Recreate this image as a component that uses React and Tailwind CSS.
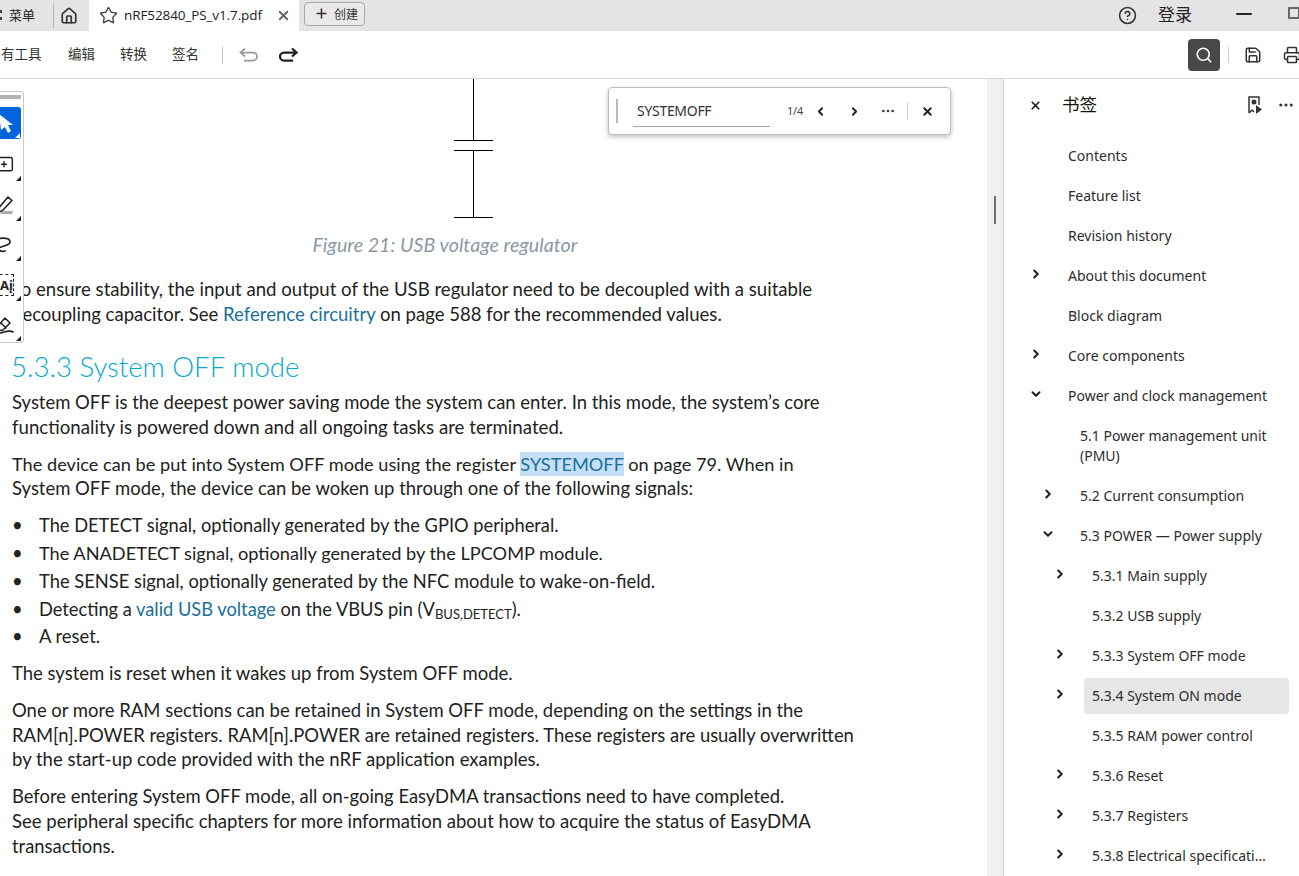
import React from 'react';
import {
  Star, Home, X, Plus, CircleHelp, Minus, Search, Save, Printer,
  ChevronRight, ChevronDown, ChevronLeft, Ellipsis, MessageSquarePlus,
} from 'lucide-react';

const BOOKMARKS = [
  { label: 'Contents', level: 0 },
  { label: 'Feature list', level: 0 },
  { label: 'Revision history', level: 0 },
  { label: 'About this document', level: 0, icon: 'right' },
  { label: 'Block diagram', level: 0 },
  { label: 'Core components', level: 0, icon: 'right' },
  { label: 'Power and clock management', level: 0, icon: 'down' },
  { label: '5.1 Power management unit (PMU)', level: 1 },
  { label: '5.2 Current consumption', level: 1, icon: 'right' },
  { label: '5.3 POWER — Power supply', level: 1, icon: 'down' },
  { label: '5.3.1 Main supply', level: 2, icon: 'right' },
  { label: '5.3.2 USB supply', level: 2 },
  { label: '5.3.3 System OFF mode', level: 2, icon: 'right' },
  { label: '5.3.4 System ON mode', level: 2, icon: 'right', active: true },
  { label: '5.3.5 RAM power control', level: 2 },
  { label: '5.3.6 Reset', level: 2, icon: 'right' },
  { label: '5.3.7 Registers', level: 2, icon: 'right' },
  { label: '5.3.8 Electrical specifications', level: 2, icon: 'right', clip: true },
];

const LEVELS = ['pl-[24px]', 'pl-[36px]', 'pl-[48px]'];

function Corner() {
  return <span className="absolute right-0 bottom-0 w-0 h-0 border-l-[5px] border-l-transparent border-b-[5px] border-b-[#222]" />;
}

function ToolBtn({ children }) {
  return (
    <div className="relative w-[21px] h-[32px] flex items-center justify-end pr-[7px] mb-[8px]">
      {children}
      <Corner />
    </div>
  );
}

function BookmarkRow({ item }) {
  return (
    <div className={`flex ${LEVELS[item.level]} pr-[10px] py-[2px]`}>
      <div className="w-[16px] shrink-0 mr-[16px] flex justify-center pt-[9px]">
        {item.icon === 'right' && <ChevronRight size={14} strokeWidth={3.5} className="text-[#222]" />}
        {item.icon === 'down' && <ChevronDown size={14} strokeWidth={3.5} className="text-[#222]" />}
      </div>
      <div className={`flex-1 min-w-0 pl-[8px] py-[8px] leading-[20px] rounded ${item.clip ? 'pr-[22px] truncate' : 'pr-[4px]'} ${item.active ? 'bg-[#e6e6e6]' : ''}`}>
        {item.label}
      </div>
    </div>
  );
}

function Line({ children, className = 'leading-[25px]' }) {
  return <div className={`whitespace-nowrap ${className}`}>{children}</div>;
}

function Bullet({ children, className = 'h-[28px]' }) {
  return (
    <div className={`flex whitespace-nowrap leading-[24px] ${className}`}>
      <span className="w-[27px]">•</span>
      <span>{children}</span>
    </div>
  );
}

const LINK = 'text-[#1a7099]';

export default function App() {
  return (
    <div className="w-[1299px] h-[876px] overflow-hidden bg-white flex flex-col text-[14px] text-[#2c2c2c] font-['Noto_Sans','Noto_Sans_CJK_SC',sans-serif]">
      {/* Tab bar */}
      <div className="h-[31px] shrink-0 bg-[#e4e4e4] flex items-center">
        <div className="w-[2px] h-[10px] ml-0 mb-[1px] border-y-[3px] border-[#444]" />
        <span className="ml-[7px] mb-[2px] text-[13px] text-[#222] font-['Noto_Sans_CJK_SC',sans-serif]">菜单</span>
        <div className="ml-[18px] w-px h-[25px] bg-[#b4b4b4]" />
        <Home size={18} strokeWidth={2.25} className="ml-[6px] text-[#333]" />
        <div className="ml-[11px] w-[210px] h-full bg-white flex items-center">
          <Star size={19} strokeWidth={1.75} className="ml-[10px] text-[#444]" />
          <span className="ml-[6px] w-[152px] text-[13.5px] text-[#222] font-['Open_Sans',sans-serif] tracking-[-0.1px]">nRF52840_PS_v1.7.pdf</span>
          <X size={15} strokeWidth={3.25} className="text-[#666]" />
        </div>
        <div className="ml-[5px] w-[61px] h-[24px] mb-[4px] border border-[#a8a8a8] rounded bg-[#e9e9e9] flex items-center pl-[9px]">
          <Plus size={15} strokeWidth={2.5} className="text-[#333]" />
          <span className="ml-[5px] text-[12px] text-[#333] font-['Noto_Sans_CJK_SC',sans-serif]">创建</span>
        </div>
        <CircleHelp size={19} strokeWidth={2} className="ml-auto mb-[1px] text-[#333]" />
        <span className="ml-[21px] mb-[3px] text-[17px] text-[#222] font-['Noto_Sans_CJK_SC',sans-serif]">登录</span>
        <Minus size={24} strokeWidth={2} className="ml-[40px] mb-[4px] text-[#222]" />
        <div className="ml-[32px] mr-[-1px] w-[12px] h-[12px] mb-[5px] border-2 border-[#666] rounded-[1px]" />
      </div>

      {/* Toolbar */}
      <div className="h-[48px] shrink-0 border-b border-[#d6d6d6] flex items-center text-[13.5px] text-[#333] font-['Noto_Sans_CJK_SC',sans-serif]">
        <div className="ml-[1px] w-[67px] mb-[2px]">有工具</div>
        <div className="w-[52px] mb-[2px]">编辑</div>
        <div className="w-[52px] mb-[2px]">转换</div>
        <div className="w-[50px] mb-[2px]">签名</div>
        <div className="w-px h-[18px] bg-[#c8c8c8]" />
        <svg width="19" height="14" viewBox="0 0 19 14" fill="none" stroke="#9a9a9a" strokeWidth="1.75" className="ml-[16px]">
          <path d="M1.5 4.5H14a4 4 0 0 1 0 8H5M6 0.5L1.5 4.5L6 8.5" />
        </svg>
        <svg width="19" height="14" viewBox="0 0 19 14" fill="none" stroke="#222" strokeWidth="2.25" className="ml-[21px]">
          <path d="M17.5 4.5H5a4 4 0 0 0 0 8H14M13 0.5L17.5 4.5L13 8.5" />
        </svg>
        <div className="ml-auto w-[32px] h-[32px] rounded-[4px] bg-[#484848] flex items-center justify-center">
          <Search size={18} strokeWidth={2.25} className="text-white" />
        </div>
        <div className="ml-[8px] w-px h-[16px] bg-[#d0d0d0]" />
        <Save size={18} strokeWidth={2} className="ml-[15px] text-[#333]" />
        <Printer size={18} strokeWidth={2} className="ml-[21px] mr-[-2px] shrink-0 text-[#333]" />
      </div>

      <div className="flex-1 min-h-0 flex">
        {/* Document */}
        <div className="relative w-[987px] shrink-0 overflow-hidden">
          <div className="pl-[12px] text-[18.4px] text-[#222] font-['Lato',sans-serif]">
            <svg width="60" height="139" className="block ml-[430px]" viewBox="0 0 60 139">
              <path d="M31.5 0V61M12 61.5H51M12 71.5H51M31.5 72V138M12 138.5H51" stroke="#000" strokeWidth="1" fill="none" />
            </svg>
            <div className="w-[866px] text-center italic text-[19.7px] text-[#8b99a3] leading-[25px] mt-[14px]">Figure 21: USB voltage regulator</div>
            <Line className="leading-[25px] mt-[20px] text-[18.6px]">To ensure stability, the input and output of the USB regulator need to be decoupled with a suitable</Line>
            <Line className="leading-[25px] text-[18.55px]">decoupling capacitor. See <span className={LINK}>Reference circuitry</span> on page 588 for the recommended values.</Line>
            <div className="mt-[22px] -ml-px text-[27.6px] font-light text-[#00a9ce] leading-[36px] whitespace-nowrap">5.3.3 System OFF mode</div>
            <Line className="leading-[25px] mt-[5px] text-[18.47px]">System OFF is the deepest power saving mode the system can enter. In this mode, the system’s core</Line>
            <Line className="leading-[25px] text-[18.67px]">functionality is powered down and all ongoing tasks are terminated.</Line>
            <Line className="leading-[25px] mt-[12px] text-[18.18px]">The device can be put into System OFF mode using the register <span className={`${LINK} bg-[#c4dff6] py-px`}>SYSTEMOFF</span> on page 79. When in</Line>
            <Line className="leading-[23px] text-[18.47px]">System OFF mode, the device can be woken up through one of the following signals:</Line>
            <div className="mt-[13px]">
              <Bullet><span className="text-[18.28px]">The DETECT signal, optionally generated by the GPIO peripheral.</span></Bullet>
              <Bullet><span className="text-[18.18px]">The ANADETECT signal, optionally generated by the LPCOMP module.</span></Bullet>
              <Bullet><span className="text-[18.33px]">The SENSE signal, optionally generated by the NFC module to wake-on-field.</span></Bullet>
              <Bullet className="h-[27px]"><span className="text-[18.26px]">Detecting a <span className={LINK}>valid USB voltage</span> on the VBUS pin (V<sub className="text-[13px]">BUS,DETECT</sub>).</span></Bullet>
              <Bullet>A reset.</Bullet>
            </div>
            <Line className="leading-[25px] mt-[9px] text-[18.48px]">The system is reset when it wakes up from System OFF mode.</Line>
            <Line className="leading-[25px] mt-[12px] text-[18.46px]">One or more RAM sections can be retained in System OFF mode, depending on the settings in the</Line>
            <Line className="leading-[24px] text-[18.42px]">RAM[n].POWER registers. RAM[n].POWER are retained registers. These registers are usually overwritten</Line>
            <Line className="leading-[25px] text-[18.55px]">by the start-up code provided with the nRF application examples.</Line>
            <Line className="leading-[25px] mt-[12px]">Before entering System OFF mode, all on-going EasyDMA transactions need to have completed.</Line>
            <Line className="leading-[25px] text-[18.53px]">See peripheral specific chapters for more information about how to acquire the status of EasyDMA</Line>
            <Line>transactions.</Line>
          </div>

          {/* Floating tools */}
          <div className="absolute left-[-1px] top-[12px] w-[25px] h-[252px] bg-white border border-[#c8c8c8] rounded-r-[3px] pt-[3px] overflow-hidden">
            <div className="w-[21px] h-[4px] bg-[#b3b3b3]" />
            <div className="relative mt-[8px] mb-[10px] w-[21px] h-[32px] bg-[#0265dc] rounded-r-[3px] flex items-center justify-end pr-[6px]">
              <svg width="16" height="20" viewBox="0 0 16 20" fill="#fff" className="shrink-0">
                <path d="M0 1L14 12H9L12 18L9 20L6 14L2 17Z" />
              </svg>
              <span className="absolute right-[1px] bottom-[1px] w-0 h-0 border-l-[5px] border-l-transparent border-b-[5px] border-b-white" />
            </div>
            <ToolBtn><MessageSquarePlus size={20} strokeWidth={1.75} className="shrink-0 text-[#222]" /></ToolBtn>
            <ToolBtn>
              <svg width="20" height="20" viewBox="0 0 20 20" fill="none" stroke="#222" strokeWidth="1.6" strokeLinejoin="round" className="shrink-0">
                <path d="M4 14L14 2L18 5.5L8 16L3 17L4 14Z" />
                <path d="M5 19H18L19 16H10Z" fill="#aaa" stroke="none" />
              </svg>
            </ToolBtn>
            <ToolBtn>
              <svg width="20" height="20" viewBox="0 0 20 20" fill="none" stroke="#222" strokeWidth="1.75" strokeLinecap="round" className="shrink-0">
                <path d="M0 6C5 2 16 2 16 7C16 11 7 11 5 13C3 15 7 17 11 16" />
              </svg>
            </ToolBtn>
            <ToolBtn>
              <div className="w-[20px] h-[22px] shrink-0 border border-dashed border-[#222] text-[13px] leading-[20px] font-bold text-right text-[#222]">Aį</div>
            </ToolBtn>
            <ToolBtn>
              <svg width="20" height="20" viewBox="0 0 20 20" fill="none" stroke="#222" strokeWidth="1.6" strokeLinecap="round" strokeLinejoin="round" className="shrink-0">
                <path d="M3 12L11 3L16 8L9 15L3 16L3 12ZM7 8L12 13M4 18C9 19 13 14 19 17" />
              </svg>
            </ToolBtn>
          </div>

          {/* Find bar */}
          <div className="absolute left-[608px] top-[8px] w-[343px] h-[48px] bg-white border border-[#bdbdbd] rounded-[4px] shadow-[0_2px_5px_rgba(0,0,0,0.25)] flex items-center">
            <div className="ml-[7px] w-[2px] h-[24px] bg-[#b8b8b8]" />
            <div className="ml-[15px] w-[137px] h-[32px] border-b border-[#a8a8a8] pl-[4px] leading-[32px] text-[14px] text-[#333] tracking-[-0.3px]">SYSTEMOFF</div>
            <span className="ml-[17px] text-[11px] text-[#444] tracking-[-0.2px]">1/4</span>
            <ChevronLeft size={13} strokeWidth={3.5} className="ml-[11px] text-[#222]" />
            <ChevronRight size={13} strokeWidth={3.5} className="ml-[21px] text-[#222]" />
            <Ellipsis size={16} strokeWidth={2} className="ml-[19px] text-[#333]" />
            <div className="ml-[11px] w-px h-[18px] bg-[#d0d0d0]" />
            <X size={13} strokeWidth={3.5} className="ml-[13px] text-[#222]" />
          </div>
        </div>

        {/* Scroll track */}
        <div className="w-[17px] shrink-0 bg-[#f0f0f0] border-r border-[#cdcdcd] pt-[117px] pl-[7px]">
          <div className="w-[2px] h-[28px] bg-[#6e6e6e]" />
        </div>

        {/* Bookmarks */}
        <div className="flex-1 min-w-0 overflow-hidden">
          <div className="h-[52px] flex items-center">
            <X size={13} strokeWidth={3.25} className="ml-[25px] text-[#222]" />
            <span className="ml-[20px] mb-[2px] text-[17.5px] text-[#111] font-['Noto_Sans_CJK_SC',sans-serif]">书签</span>
            <svg width="16" height="18" viewBox="0 0 16 18" fill="none" className="ml-auto text-[#333]">
              <path d="M2 17V1H12V9M2 17L5 14L7 16" stroke="currentColor" strokeWidth="1.5" />
              <circle cx="7" cy="6" r="2.5" fill="currentColor" />
              <path d="M9 9L15 13.5L9 18Z" fill="currentColor" />
            </svg>
            <Ellipsis size={18} strokeWidth={2} className="ml-[14px] mr-[4px] text-[#333]" />
          </div>
          <div className="mt-[5px]">
            {BOOKMARKS.map(item => <BookmarkRow key={item.label} item={item} />)}
          </div>
        </div>
      </div>
    </div>
  );
}
